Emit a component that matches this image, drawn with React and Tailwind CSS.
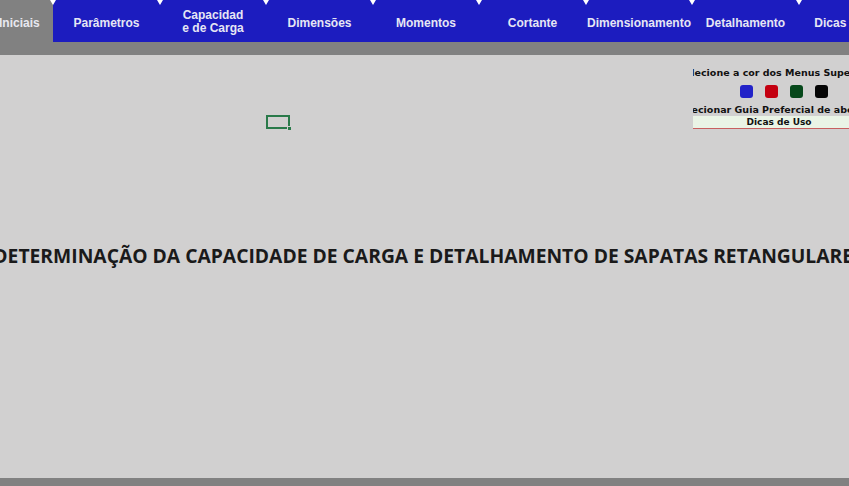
import React from 'react';

const tabs = [
  { label: 'Parâmetros', w: 'w-[107px]' },
  { label: ['Capacidad', 'e de Carga'], w: 'w-[106px]' },
  { label: 'Dimensões', w: 'w-[107px]' },
  { label: 'Momentos', w: 'w-[106px]' },
  { label: 'Cortante', w: 'w-[107px]' },
  { label: 'Dimensionamento', w: 'w-[106px]' },
  { label: 'Detalhamento', w: 'w-[107px]' },
  { label: 'Dicas de Uso', w: 'w-[106px]' },
];

function Marker() {
  return (
    <span className="absolute -left-[3px] top-0 w-0 h-0 border-l-[3px] border-r-[3px] border-t-[5px] border-l-transparent border-r-transparent border-t-white" />
  );
}

export default function App() {
  return (
    <div className="w-[849px] h-[486px] overflow-hidden bg-[#d1d0d0] flex flex-col" style={{ fontFamily: '"Liberation Sans", Arial, sans-serif' }}>
      {/* Menu superior */}
      <div className="h-[55px] bg-[#818181] shrink-0">
        <div className="flex h-[42px] overflow-hidden">
          <div className="w-[53px] shrink-0 flex items-center pt-[4px] text-[12px] font-bold text-[#e8e8f0]">
            <span className="-ml-[1px]">Iniciais</span>
          </div>
          {tabs.map((t, i) => (
            <div key={i} className={`relative ${t.w} shrink-0 bg-[#1c1cbf] flex items-center justify-center pt-[4px] text-[12px] font-bold text-[#e6e6f4] leading-[13px] whitespace-nowrap`}>
              <Marker />
              {Array.isArray(t.label) ? (
                <div className="flex flex-col items-center -mt-[2px]">
                  <span>{t.label[0]}</span>
                  <span>{t.label[1]}</span>
                </div>
              ) : (
                <span>{t.label}</span>
              )}
            </div>
          ))}
        </div>
      </div>

      {/* Folha */}
      <div className="relative flex-1 flex items-start justify-center overflow-hidden">
        {/* cursor de célula */}
        <div className="absolute left-[266px] top-[60px] w-[24px] h-[14px] border-2 border-[#2a7a4a]">
          <span className="absolute -right-[4px] -bottom-[4px] w-[5px] h-[5px] bg-[#2a7a4a] border border-[#d1d0d0]" />
        </div>

        {/* painel de cores */}
        <div className="absolute left-[693px] top-[12px] w-[156px] overflow-hidden flex flex-col text-[9.5px] font-bold text-[#111]" style={{ fontFamily: '"DejaVu Sans", Tahoma, sans-serif' }}>
          <div className="whitespace-nowrap -ml-[15px] h-[12px] leading-[12px]">Selecione a cor dos Menus Superiores</div>
          <div className="flex gap-[12px] pl-[47px] mt-[6px] h-[13px]">
            <span className="w-[13px] h-[13px] rounded-[3px] bg-[#2222c8]" />
            <span className="w-[13px] h-[13px] rounded-[3px] bg-[#c40010]" />
            <span className="w-[13px] h-[13px] rounded-[3px] bg-[#06481a]" />
            <span className="w-[13px] h-[13px] rounded-[3px] bg-[#050505]" />
          </div>
          <div className="whitespace-nowrap -ml-[18px] mt-[6px] h-[11px] leading-[11px]">Selecionar Guia Prefercial de abertura</div>
          <div className="mt-[1px] h-[13px] bg-[#eaf4e6] border-b border-[#c86060] flex items-center justify-center pl-[16px] leading-[12px] text-[9px]">Dicas de Uso</div>
        </div>

        <div className="mt-[187px] ml-[8px] whitespace-nowrap text-[19.3px] font-bold text-[#1a1a1a]" style={{ fontFamily: '"Open Sans", "Noto Sans", sans-serif' }}>
          DETERMINAÇÃO DA CAPACIDADE DE CARGA E DETALHAMENTO DE SAPATAS RETANGULARES
        </div>
      </div>

      <div className="h-[8px] bg-[#818181] shrink-0" />
    </div>
  );
}
